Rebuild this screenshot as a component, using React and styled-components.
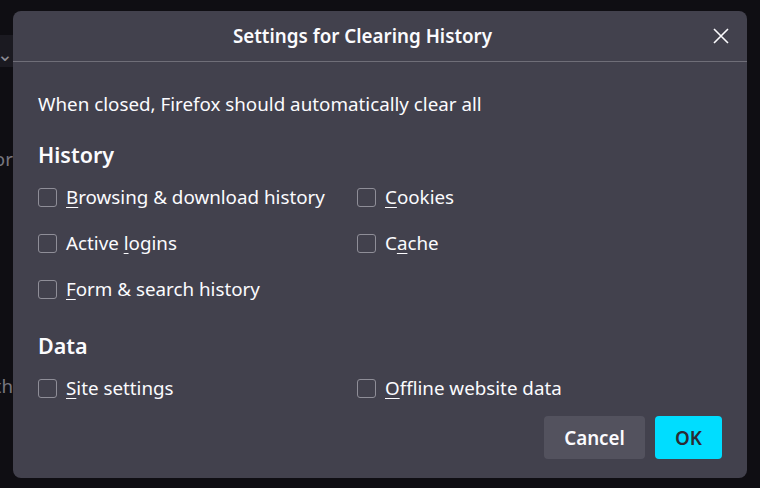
import styled, { createGlobalStyle } from 'styled-components';

const GlobalStyle = createGlobalStyle`
    html, body {
        margin: 0;
        padding: 0;
        background: #0f0e13;
        font-family: "Noto Sans", "Open Sans", sans-serif;
        overflow: hidden;
    }
`;

const StyledPage = styled.div`
    position: relative;
    width: 760px;
    height: 488px;
    background: #0f0e13;
`;

const StyledBackdrop = styled.div`
    display: flex;
    flex-direction: column;
    width: 13px;
    padding-top: 35px;
    color: #77767f;
    font-size: 18.8px;
`;

const StyledBackdropBox = styled.div`
    height: 32px;
    background: #1b1a21;
    display: flex;
    align-items: center;
    justify-content: flex-end;
    padding-top: 6px;
    box-sizing: border-box;
    overflow: hidden;
    white-space: nowrap;
    color: #8d8c95;
`;

const StyledBackdropLine = styled.div`
    display: flex;
    justify-content: flex-end;
    overflow: hidden;
    white-space: nowrap;
    height: 26px;
    line-height: 26px;
    margin-top: ${({ $gap }) => $gap}px;
`;

const StyledDialog = styled.div`
    position: absolute;
    left: 13px;
    top: 11px;
    width: 734px;
    height: 467px;
    background: #42414d;
    border-radius: 8px;
    color: #fbfbfe;
    display: flex;
    flex-direction: column;
    box-sizing: border-box;
`;

const StyledHeader = styled.div`
    height: 50px;
    padding-right: 35px;
    border-bottom: 1px solid #6f6e78;
    display: flex;
    align-items: center;
    justify-content: center;
    position: relative;
`;

const StyledTitle = styled.h1`
    margin: 0;
    font-size: 18.8px;
    font-weight: 600;
`;

const StyledClose = styled.button`
    position: absolute;
    right: 17px;
    top: 16px;
    width: 18px;
    height: 18px;
    padding: 0;
    border: none;
    background: none;
    display: flex;
    align-items: center;
    justify-content: center;
`;

const StyledBody = styled.div`
    flex: 1;
    padding: 29px 25px 0 25px;
    display: flex;
    flex-direction: column;
`;

const StyledIntro = styled.p`
    margin: 0;
    font-size: 18.8px;
    line-height: 26px;
`;

const StyledSectionTitle = styled.h2`
    margin: ${({ $top }) => $top}px 0 0 0;
    font-size: 21.5px;
    font-weight: 600;
    line-height: 30px;
`;

const StyledGrid = styled.div`
    display: grid;
    grid-template-columns: 319px 1fr;
    row-gap: 20px;
    margin-top: 14px;
`;

const StyledOption = styled.label`
    display: flex;
    align-items: center;
    gap: 9px;
    font-size: 18.8px;
    line-height: 26px;
    grid-column: ${({ $col }) => $col};
`;

const StyledBox = styled.span`
    width: 19px;
    height: 19px;
    border: 1px solid #8f8e98;
    border-radius: 3px;
    box-sizing: border-box;
    flex: none;
`;

const StyledKey = styled.span`
    text-decoration: underline;
    text-decoration-thickness: 1px;
    text-underline-offset: 3px;
`;

const StyledFooter = styled.div`
    display: flex;
    justify-content: flex-end;
    gap: 10px;
    padding: 0 25px 19px 0;
`;

const StyledButton = styled.button`
    height: 43px;
    min-width: ${({ $width }) => $width}px;
    border: none;
    border-radius: 4px;
    font-family: inherit;
    font-size: 18.8px;
    font-weight: 600;
    background: ${({ $primary }) => ($primary ? '#00ddff' : '#53525e')};
    color: ${({ $primary }) => ($primary ? '#2b2a33' : '#fbfbfe')};
`;

const HISTORY = [
    { pre: '', key: 'B', post: 'rowsing & download history', col: 1 },
    { pre: '', key: 'C', post: 'ookies', col: 2 },
    { pre: 'Active ', key: 'l', post: 'ogins', col: 1 },
    { pre: 'C', key: 'a', post: 'che', col: 2 },
    { pre: '', key: 'F', post: 'orm & search history', col: 1 },
];

const DATA = [
    { pre: '', key: 'S', post: 'ite settings', col: 1 },
    { pre: '', key: 'O', post: 'ffline website data', col: 2 },
];

const Option = ({ pre, keyChar, post, col }) => (
    <StyledOption $col={col}>
        <StyledBox />
        <span>{pre}<StyledKey>{keyChar}</StyledKey>{post}</span>
    </StyledOption>
);

const CloseIcon = () => (
    <svg width="16" height="16" viewBox="0 0 16 16">
        <path d="M1 1 L15 15 M15 1 L1 15" stroke="#fbfbfe" strokeWidth="1.6" />
    </svg>
);

export default function App() {
    return (
        <StyledPage>
            <GlobalStyle />
            <StyledBackdrop>
                <StyledBackdropBox>history ⌄</StyledBackdropBox>
                <StyledBackdropLine $gap={79}>custom settings for</StyledBackdropLine>
                <StyledBackdropLine $gap={201}>when Firefox closes th</StyledBackdropLine>
            </StyledBackdrop>
            <StyledDialog>
                <StyledHeader>
                    <StyledTitle>Settings for Clearing History</StyledTitle>
                    <StyledClose><CloseIcon /></StyledClose>
                </StyledHeader>
                <StyledBody>
                    <StyledIntro>When closed, Firefox should automatically clear all</StyledIntro>
                    <StyledSectionTitle $top={23}>History</StyledSectionTitle>
                    <StyledGrid>
                        {HISTORY.map((o, i) => (
                            <Option key={i} pre={o.pre} keyChar={o.key} post={o.post} col={o.col} />
                        ))}
                    </StyledGrid>
                    <StyledSectionTitle $top={29}>Data</StyledSectionTitle>
                    <StyledGrid>
                        {DATA.map((o, i) => (
                            <Option key={i} pre={o.pre} keyChar={o.key} post={o.post} col={o.col} />
                        ))}
                    </StyledGrid>
                </StyledBody>
                <StyledFooter>
                    <StyledButton $width={101}>Cancel</StyledButton>
                    <StyledButton $width={67} $primary>OK</StyledButton>
                </StyledFooter>
            </StyledDialog>
        </StyledPage>
    );
}
